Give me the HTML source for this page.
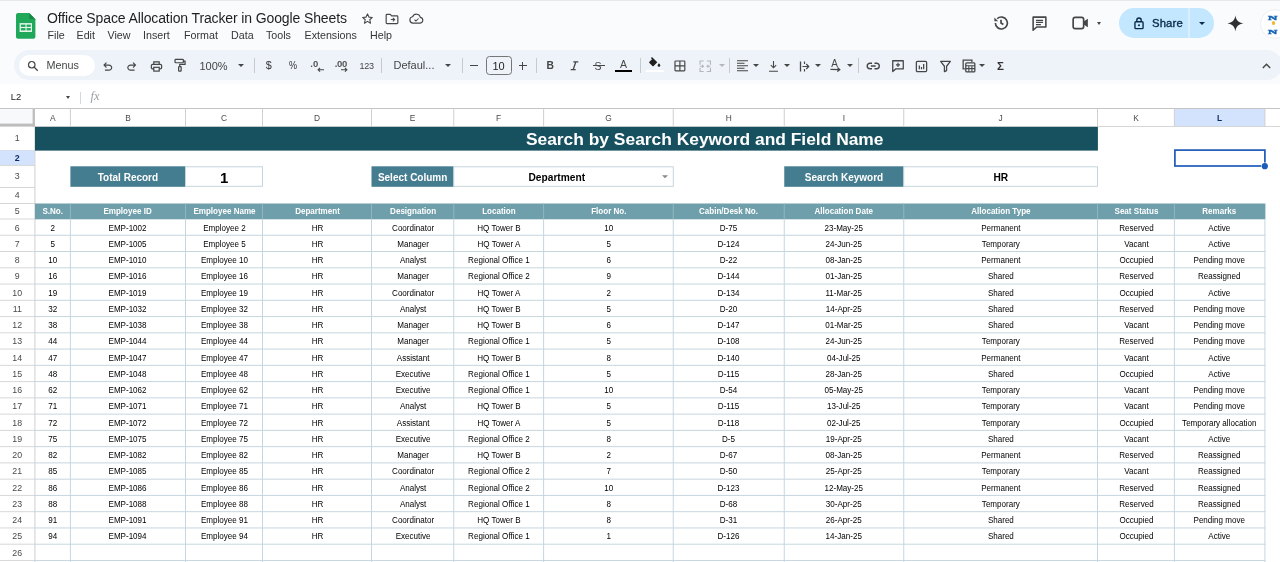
<!DOCTYPE html>
<html lang="en"><head><meta charset="utf-8">
<title>Office Space Allocation Tracker in Google Sheets</title>
<style>
*{box-sizing:border-box;margin:0;padding:0}
html,body{width:1280px;height:562px;overflow:hidden;background:#f9fbfd;font-family:"Liberation Sans",sans-serif;color:#1f1f1f}
#top{position:absolute;left:0;top:0;width:1280px;height:84px;background:#f9fbfd}
#topline{position:absolute;left:0;top:0;width:1280px;height:1px;background:#e6e8eb}
.abs{position:absolute}
#doctitle{position:absolute;left:47px;top:9px;font-size:14px;line-height:19px;letter-spacing:-0.12px;color:#1f1f1f;white-space:nowrap}
.menu{position:absolute;top:28px;font-size:10.7px;line-height:14px;color:#333638;white-space:nowrap}
#tb{position:absolute;left:14px;top:50px;width:1268px;height:30px;border-radius:15px;background:#eef2f9}
#menus{position:absolute;left:19px;top:54.5px;width:76px;height:21px;border-radius:11px;background:#fff}
.tt{position:absolute;font-size:10.5px;line-height:14px;color:#444746;white-space:nowrap}
.sep{position:absolute;top:58px;width:1px;height:15px;background:#c7c9cc}
.ic{position:absolute;overflow:visible}
.caret{position:absolute;width:0;height:0;border-left:3px solid transparent;border-right:3px solid transparent;border-top:3.2px solid #444746}
#fbar{position:absolute;left:0;top:84px;width:1280px;height:24.5px;background:#fff}
#grid{position:absolute;left:0;top:0;width:1280px;height:562px}
#gridbg{position:absolute;left:0;top:108.5px;width:1280px;height:454px;background:#fff}
.cl{position:absolute;text-align:center;font-size:8.4px;line-height:18.5px;color:#4a4a4a}
.cl.sel{color:#0b2a5c;font-weight:bold}
.rl{position:absolute;left:0;width:34.5px;text-align:center;font-size:8.8px;color:#4a4a4a}
.rl.sel{color:#0b2a5c;font-weight:bold}
.title{position:absolute;color:#fff;font-weight:bold;font-size:17.4px;text-align:center;white-space:nowrap;padding-left:276.4px}
.lbl{position:absolute;color:#fff;font-weight:bold;font-size:10px;text-align:center;white-space:nowrap}
.val{position:absolute;color:#000;font-weight:bold;font-size:10.2px;text-align:center;white-space:nowrap}
.val.big{font-size:15px}
.h5c{position:absolute;color:#fff;font-weight:bold;font-size:8.5px;transform:scaleX(.947);text-align:center;white-space:nowrap}
.c{position:absolute;color:#000;font-size:8.5px;transform:scaleX(.947);text-align:center;white-space:nowrap}
</style></head><body>
<div id="all" style="position:absolute;left:0;top:0;width:1280px;height:562px;will-change:transform">
<div id="top"></div>
<div id="topline"></div>
<!-- sheets logo -->
<svg class="ic" style="left:16.2px;top:12.9px" width="19.4" height="25.8" viewBox="0 0 19.4 25.8">
  <path d="M2 0H13.2L19.4 6.2V23.8a2 2 0 0 1-2 2H2a2 2 0 0 1-2-2V2a2 2 0 0 1 2-2z" fill="#1fa85a"/>
  <path d="M13.2 0L19.4 6.2H15a1.8 1.8 0 0 1-1.8-1.8z" fill="#168a43"/>
  <rect x="3.6" y="10.1" width="12.4" height="8.9" fill="#e4f5ea"/>
  <rect x="4.9" y="11.6" width="4.6" height="2.3" fill="#1fa85a"/><rect x="10.6" y="11.6" width="4.2" height="2.3" fill="#1fa85a"/>
  <rect x="4.9" y="15.1" width="4.6" height="2.3" fill="#1fa85a"/><rect x="10.6" y="15.1" width="4.2" height="2.3" fill="#1fa85a"/>
</svg>
<div id="doctitle">Office Space Allocation Tracker in Google Sheets</div>
<!-- star, move, cloud -->
<svg class="ic" style="left:361px;top:12px" width="13" height="13" viewBox="0 0 24 24"><path d="M12 3.5l2.6 5.9 6.4.6-4.8 4.3 1.4 6.3L12 17.3l-5.6 3.3 1.4-6.3L3 10l6.4-.6z" fill="none" stroke="#444746" stroke-width="2" stroke-linejoin="round"/></svg>
<svg class="ic" style="left:385px;top:12.5px" width="14" height="12" viewBox="0 0 24 20"><path d="M2 3.5a1.5 1.5 0 0 1 1.5-1.5H9l2.5 2.5h9A1.5 1.5 0 0 1 22 6v10.5a1.5 1.5 0 0 1-1.5 1.5h-17A1.5 1.5 0 0 1 2 16.500z" fill="none" stroke="#444746" stroke-width="2"/><path d="M10 11h6M13.500 8l3 3-3 3" fill="none" stroke="#444746" stroke-width="1.800"/></svg>
<svg class="ic" style="left:409px;top:13px" width="15" height="11" viewBox="0 0 26 19"><path d="M7 17.500a5.500 5.500 0 0 1-.7-10.950A7 7 0 0 1 19.700 7.600 5 5 0 0 1 19.500 17.500z" fill="none" stroke="#444746" stroke-width="2"/><path d="M9.500 11.500l2.500 2.500 4.500-4.500" fill="none" stroke="#444746" stroke-width="1.800"/></svg>
<!-- menus -->
<div class="menu" style="left:47.5px">File</div>
<div class="menu" style="left:76.5px">Edit</div>
<div class="menu" style="left:107.5px">View</div>
<div class="menu" style="left:143px">Insert</div>
<div class="menu" style="left:184px">Format</div>
<div class="menu" style="left:231px">Data</div>
<div class="menu" style="left:266px">Tools</div>
<div class="menu" style="left:304.500px">Extensions</div>
<div class="menu" style="left:370px">Help</div>
<!-- right top -->
<svg class="ic" style="left:992px;top:14px" width="18" height="18" viewBox="0 0 24 24"><path d="M4.500 12a8 8 0 1 0 2.400-5.700" fill="none" stroke="#444746" stroke-width="2.200"/><path d="M3.200 4.500v5h5z" fill="#444746"/><path d="M12 7.500V12l3.200 2" fill="none" stroke="#444746" stroke-width="2.200"/></svg>
<svg class="ic" style="left:1031px;top:15px" width="17" height="17" viewBox="0 0 24 24"><path d="M3 3h18v14H8l-5 4.500z" fill="none" stroke="#444746" stroke-width="2.200" stroke-linejoin="round"/><path d="M7 7.500h10M7 10.500h10M7 13.500h7" stroke="#444746" stroke-width="1.600"/></svg>
<svg class="ic" style="left:1072px;top:16px" width="17" height="14" viewBox="0 0 24 20"><rect x="1.500" y="2" width="15" height="16" rx="3" fill="none" stroke="#444746" stroke-width="2.400"/><path d="M16.500 8l6-4v12l-6-4z" fill="#444746"/></svg>
<div class="caret" style="left:1096.500px;top:21.500px;border-left-width:2.800px;border-right-width:2.800px;border-top-width:3px"></div>
<div class="abs" style="left:1119px;top:8px;width:95px;height:30px;border-radius:15px;background:#c2e7ff"></div>
<div class="abs" style="left:1188.200px;top:8px;width:1.800px;height:30px;background:#d9eeff"></div>
<svg class="ic" style="left:1134px;top:16.500px" width="10" height="12.500" viewBox="0 0 16 20"><rect x="1.500" y="7.500" width="13" height="11" rx="1.500" fill="none" stroke="#0b2a4a" stroke-width="2.200"/><path d="M4.500 7.500V5a3.500 3.500 0 0 1 7 0v2.500" fill="none" stroke="#0b2a4a" stroke-width="2.200"/><circle cx="8" cy="13" r="1.600" fill="#0b2a4a"/></svg>
<div class="abs" style="left:1152px;top:16px;font-size:11.300px;line-height:14px;color:#0b2a4a;-webkit-text-stroke:0.350px #0b2a4a;letter-spacing:0.150px;transform-origin:0 0">Share</div>
<div class="caret" style="left:1199px;top:22px;border-top-color:#0b2a4a"></div>
<svg class="ic" style="left:1227.200px;top:15px" width="16.800" height="16.800" viewBox="0 0 24 24"><path d="M12 0.500C12.700 7.500 16.500 11.300 23.500 12 16.500 12.700 12.700 16.500 12 23.500 11.300 16.500 7.500 12.700 0.500 12 7.500 11.300 11.300 7.500 12 0.500z" fill="#303030"/></svg>
<div class="abs" style="left:1260px;top:8.500px;width:30px;height:30px;border-radius:50%;background:#fff;border:1px solid #eeeef1;overflow:hidden">
  <div class="abs" style="left:6.800px;top:4.300px;font-family:'Liberation Serif',serif;font-weight:bold;font-size:7px;line-height:8px;color:#1666b8;-webkit-text-stroke:0.500px #1666b8;transform:scaleX(1.850);transform-origin:0 0">N</div>
  <div class="abs" style="left:10.800px;top:11.500px;width:3.400px;height:4.200px;border-radius:1.500px;background:#f2b632"></div>
  <div class="abs" style="left:6.800px;top:18.500px;font-family:'Liberation Serif',serif;font-weight:bold;font-size:7px;line-height:8px;color:#1666b8;-webkit-text-stroke:0.500px #1666b8;transform:scaleX(1.850);transform-origin:0 0">N</div>
</div>
<!-- toolbar -->
<div id="tb"></div>
<div id="menus"></div>
<svg class="ic" style="left:26.500px;top:59.700px" width="12" height="12" viewBox="0 0 24 24"><circle cx="9.500" cy="9.500" r="6.500" fill="none" stroke="#444746" stroke-width="2.400"/><path d="M14.500 14.500l7 7" stroke="#444746" stroke-width="2.600"/></svg>
<div class="tt" style="left:46.500px;top:57.800px;font-size:10.800px">Menus</div>
<!-- undo/redo -->
<svg class="ic" style="left:101px;top:59.500px" width="13.500" height="13.500" viewBox="0 0 24 24"><path d="M7 19v-2h7.100q1.575 0 2.738-1T18 13.500 16.838 11 14.100 10H7.800l2.600 2.600L9 14 4 9l5-5 1.400 1.400L7.800 8h6.300q2.425 0 4.163 1.575T20 13.500t-1.737 3.925T14.100 19z" fill="#444746"/></svg>
<svg class="ic" style="left:125px;top:59.500px" width="13.500" height="13.500" viewBox="0 0 24 24"><g transform="translate(24,0) scale(-1,1)"><path d="M7 19v-2h7.100q1.575 0 2.738-1T18 13.500 16.838 11 14.100 10H7.800l2.600 2.600L9 14 4 9l5-5 1.400 1.400L7.800 8h6.300q2.425 0 4.163 1.575T20 13.500t-1.737 3.925T14.100 19z" fill="#444746"/></g></svg>
<!-- print -->
<svg class="ic" style="left:150px;top:59.700px" width="13" height="13" viewBox="0 0 24 24"><path d="M7 8V3.500h10V8" fill="none" stroke="#444746" stroke-width="2.200"/><rect x="2.500" y="8" width="19" height="8.500" rx="2.500" fill="none" stroke="#444746" stroke-width="2.200"/><rect x="7" y="13.500" width="10" height="7" fill="#eef2f9" stroke="#444746" stroke-width="2.200"/></svg>
<!-- paint format -->
<svg class="ic" style="left:173px;top:58.300px" width="13.500" height="14.500" viewBox="0 0 24 26"><rect x="3.500" y="2.500" width="15" height="6" rx="1.500" fill="none" stroke="#444746" stroke-width="2.200"/><path d="M18.500 5.500h3v6H12v4" fill="none" stroke="#444746" stroke-width="2.200"/><rect x="10" y="15.500" width="4.500" height="8" rx="1" fill="none" stroke="#444746" stroke-width="2.200"/></svg>
<div class="tt" style="left:199.500px;top:58.500px;font-size:11px">100%</div>
<div class="caret" style="left:238px;top:64px"></div>
<div class="sep" style="left:253.500px"></div>
<div class="tt" style="left:265.700px;top:58px;font-size:10.800px;color:#333">$</div>
<div class="tt" style="left:288.500px;top:59px;font-size:10.300px;color:#333;transform:scaleX(.88);transform-origin:0 0">%</div>
<div class="tt" style="left:310.300px;top:56.500px;font-size:9.500px;font-weight:bold;color:#555">.0</div>
<svg class="ic" style="left:316.700px;top:67px" width="7" height="5.500" viewBox="0 0 8 6"><path d="M8 3H1.500M3.500 0.800L1.200 3l2.300 2.200" fill="none" stroke="#444746" stroke-width="1.200"/></svg>
<div class="tt" style="left:334.700px;top:56.500px;font-size:9.500px;font-weight:bold;letter-spacing:-0.300px;color:#555">.00</div>
<svg class="ic" style="left:341px;top:67px" width="7" height="5.500" viewBox="0 0 8 6"><path d="M0 3h6.500M4.500 0.800L6.800 3 4.500 5.200" fill="none" stroke="#444746" stroke-width="1.200"/></svg>
<div class="tt" style="left:359.500px;top:58.500px;font-size:9px;letter-spacing:-0.200px">123</div>
<div class="sep" style="left:381px"></div>
<div class="tt" style="left:393.500px;top:58px;font-size:11px">Defaul...</div>
<div class="caret" style="left:444.500px;top:64px"></div>
<div class="sep" style="left:462px"></div>
<div class="abs" style="left:470px;top:64.800px;width:8.300px;height:1.300px;background:#444746"></div>
<div class="abs" style="left:486px;top:56px;width:26px;height:18.500px;border:1px solid #747775;border-radius:3.500px"></div>
<div class="tt" style="left:492.500px;top:58.500px;font-size:11px;color:#1f1f1f">10</div>
<div class="abs" style="left:518.500px;top:64.800px;width:8px;height:1.300px;background:#444746"></div>
<div class="abs" style="left:521.850px;top:61.500px;width:1.300px;height:8px;background:#444746"></div>
<div class="sep" style="left:535.500px"></div>
<div class="tt" style="left:546.500px;top:58.500px;font-size:10.300px;font-weight:bold;color:#444746">B</div>
<svg class="ic" style="left:570px;top:61px" width="9" height="9.500" viewBox="0 0 9 9.500"><path d="M3.300 0.900h5M0.700 8.600h5M5.800 0.900L3.200 8.600" fill="none" stroke="#444746" stroke-width="1.350"/></svg>
<div class="tt" style="left:594.500px;top:58.500px;font-size:10.500px;color:#444746">S</div>
<div class="abs" style="left:592.500px;top:65px;width:12px;height:1.300px;background:#444746"></div>
<div class="tt" style="left:620px;top:57px;font-size:10.500px;color:#444746">A</div>
<div class="abs" style="left:615px;top:69.800px;width:17px;height:2.400px;background:#000"></div>
<div class="sep" style="left:639.500px"></div>
<!-- fill color -->
<svg class="ic" style="left:648px;top:57px" width="13.500" height="10.700" viewBox="0 0 24 19"><path d="M5 2l2-2 9.500 9.500-6.500 6.500a1.500 1.500 0 0 1-2.100 0L2.500 10.500a1.500 1.500 0 0 1 0-2.100L7.500 3.500z" fill="#1f1f1f"/><path d="M19.500 11s-2.300 2.600-2.300 4.200a2.300 2.300 0 0 0 4.600 0c0-1.600-2.300-4.200-2.300-4.200z" fill="#1f1f1f"/></svg>
<div class="abs" style="left:646px;top:69.500px;width:17.500px;height:2.800px;background:#fff"></div>
<!-- borders -->
<svg class="ic" style="left:674px;top:60px" width="11.800" height="11.800" viewBox="0 0 24 24"><rect x="2" y="2" width="20" height="20" rx="1.500" fill="none" stroke="#444746" stroke-width="2.400"/><path d="M12 2v20M2 12h20" stroke="#444746" stroke-width="2.400"/></svg>
<!-- merge (disabled) -->
<svg class="ic" style="left:699px;top:59.500px" width="12.500" height="12.500" viewBox="0 0 24 24"><path d="M9 2H2v7M15 2h7v7M9 22H2v-7M15 22h7v-7M2 12h6M16 12h6M6 9.500L8.500 12 6 14.500M18 9.500L15.500 12 18 14.500" fill="none" stroke="#b4b7ba" stroke-width="2.200"/></svg>
<div class="caret" style="left:718.500px;top:64px;border-top-color:#b4b7ba"></div>
<div class="sep" style="left:728.500px"></div>
<!-- halign -->
<svg class="ic" style="left:736.500px;top:60px" width="11" height="11.500" viewBox="0 0 22 23"><path d="M0 1.500h22M0 6.500h15M0 11.500h22M0 16.500h15M0 21.500h22" stroke="#444746" stroke-width="2.300"/></svg>
<div class="caret" style="left:753px;top:64px"></div>
<!-- valign -->
<svg class="ic" style="left:768px;top:59.500px" width="11" height="12.500" viewBox="0 0 24 28"><path d="M12 2v15M6 11.500l6 6 6-6M2 25h20" fill="none" stroke="#444746" stroke-width="2.400"/></svg>
<div class="caret" style="left:784px;top:64px"></div>
<!-- wrap -->
<svg class="ic" style="left:799px;top:60.500px" width="11" height="11" viewBox="0 0 22 22"><path d="M3 1v20" fill="none" stroke="#444746" stroke-width="2.600"/><path d="M11 1v5M11 16v5" fill="none" stroke="#444746" stroke-width="2.300"/><path d="M7 11h12M14.500 6l5 5-5 5" fill="none" stroke="#444746" stroke-width="2.300"/></svg>
<div class="caret" style="left:815px;top:64px"></div>
<!-- rotate -->
<div class="tt" style="left:831.300px;top:57.300px;font-size:10px;color:#444746">A</div>
<svg class="ic" style="left:830px;top:67.300px" width="11" height="5" viewBox="0 0 11 5"><path d="M0.500 2.300l9 0.400M7.500 0.500l2.300 2.200L7.300 4.600" fill="none" stroke="#444746" stroke-width="1.200"/></svg>
<div class="caret" style="left:846.500px;top:64px"></div>
<div class="sep" style="left:858px"></div>
<!-- link -->
<svg class="ic" style="left:866px;top:61.500px" width="14.500" height="8" viewBox="0 0 24 13"><path d="M10 2H6.500a4.500 4.500 0 0 0 0 9H10M14 2h3.500a4.500 4.500 0 0 1 0 9H14M8 6.500h8" fill="none" stroke="#444746" stroke-width="2.300"/></svg>
<!-- comment add -->
<svg class="ic" style="left:890.500px;top:59px" width="14" height="14" viewBox="0 0 24 24"><path d="M3 3h18v14H8l-5 4.500z" fill="none" stroke="#444746" stroke-width="2.200" stroke-linejoin="round"/><path d="M12 6.500v7M8.500 10h7" stroke="#444746" stroke-width="2"/></svg>
<!-- chart -->
<svg class="ic" style="left:915px;top:59.500px" width="13" height="13" viewBox="0 0 24 24"><rect x="2.500" y="2.500" width="19" height="19" rx="2" fill="none" stroke="#444746" stroke-width="2.300"/><path d="M8 17v-7M12 17v-4M16 17V7.500" stroke="#444746" stroke-width="2.300"/></svg>
<!-- filter -->
<svg class="ic" style="left:939px;top:60px" width="13" height="12.500" viewBox="0 0 24 23"><path d="M3 2.500h18l-7 9v8l-4 2v-10z" fill="none" stroke="#444746" stroke-width="2.300" stroke-linejoin="round"/></svg>
<!-- table views -->
<svg class="ic" style="left:961.500px;top:59px" width="14" height="14" viewBox="0 0 24 24"><path d="M5 17H2V2h15v3" fill="none" stroke="#444746" stroke-width="2.200"/><rect x="6.500" y="6.500" width="15.500" height="15.500" rx="1.500" fill="none" stroke="#444746" stroke-width="2.200"/><path d="M6.500 11.500h15.500M6.500 16.500h15.500M11.700 11.500v10.500M17 11.500v10.500" stroke="#444746" stroke-width="1.800"/></svg>
<div class="caret" style="left:979px;top:64px"></div>
<div class="tt" style="left:997px;top:58.500px;font-size:11.500px;font-weight:bold;color:#333">Σ</div>
<svg class="ic" style="left:1262.200px;top:63px" width="9" height="6" viewBox="0 0 9 6"><path d="M0.800 5l3.700-3.700L8.200 5" fill="none" stroke="#444746" stroke-width="1.400"/></svg>

<div id="fbar">
  <div class="abs" style="left:10.8px;top:5.7px;font-size:9.4px;line-height:14px;color:#202124">L2</div>
  <div class="caret" style="left:65.5px;top:11.6px;border-left-width:2.9px;border-right-width:2.9px;border-top-width:3.2px"></div>
  <div class="abs" style="left:80.3px;top:7.5px;width:1px;height:12px;background:#d5d8dc"></div>
  <div class="abs" style="left:90.5px;top:4.5px;font-size:12.5px;line-height:14px;color:#9aa0a6;font-style:italic;font-family:'Liberation Serif',serif">fx</div>
</div>
<div id="gridbg"></div>
<div id="grid">
<svg class="abs" style="left:0;top:0" width="1280" height="562" viewBox="0 0 1280 562"><rect x="0" y="108.5" width="1280" height="18.3" fill="#fff"/>
<rect x="1174.4" y="108.5" width="90.5" height="18.3" fill="#d3e3fd"/>
<rect x="0" y="108" width="1280" height="1" fill="#c4c4c4"/>
<rect x="35" y="126" width="1245" height="1" fill="#d6d6d6"/>
<rect x="69.9" y="108.5" width="1" height="18.3" fill="#d0d0d0"/>
<rect x="185" y="108.5" width="1" height="18.3" fill="#d0d0d0"/>
<rect x="262" y="108.5" width="1" height="18.3" fill="#d0d0d0"/>
<rect x="371" y="108.5" width="1" height="18.3" fill="#d0d0d0"/>
<rect x="453.25" y="108.5" width="1" height="18.3" fill="#d0d0d0"/>
<rect x="543.1" y="108.5" width="1" height="18.3" fill="#d0d0d0"/>
<rect x="672.75" y="108.5" width="1" height="18.3" fill="#d0d0d0"/>
<rect x="783.75" y="108.5" width="1" height="18.3" fill="#d0d0d0"/>
<rect x="903.25" y="108.5" width="1" height="18.3" fill="#d0d0d0"/>
<rect x="1097" y="108.5" width="1" height="18.3" fill="#d0d0d0"/>
<rect x="1173.9" y="108.5" width="1" height="18.3" fill="#d0d0d0"/>
<rect x="1264.4" y="108.5" width="1" height="18.3" fill="#d0d0d0"/>
<rect x="0" y="109" width="33" height="14.8" fill="#f8f9fa"/>
<rect x="32.6" y="109" width="2.3" height="17.8" fill="#bdbdbd"/>
<rect x="0" y="123.6" width="34.9" height="3" fill="#bdbdbd"/>
<rect x="0" y="150" width="35" height="1" fill="#d8d8d8"/>
<rect x="0" y="150.5" width="34.5" height="15" fill="#d3e3fd"/>
<rect x="0" y="165" width="35" height="1" fill="#d8d8d8"/>
<rect x="0" y="187" width="35" height="1" fill="#d8d8d8"/>
<rect x="0" y="203" width="35" height="1" fill="#d8d8d8"/>
<rect x="0" y="218.5" width="35" height="1" fill="#d8d8d8"/>
<rect x="0" y="234.76" width="35" height="1" fill="#d8d8d8"/>
<rect x="0" y="251.02" width="35" height="1" fill="#d8d8d8"/>
<rect x="0" y="267.28" width="35" height="1" fill="#d8d8d8"/>
<rect x="0" y="283.54" width="35" height="1" fill="#d8d8d8"/>
<rect x="0" y="299.8" width="35" height="1" fill="#d8d8d8"/>
<rect x="0" y="316.06" width="35" height="1" fill="#d8d8d8"/>
<rect x="0" y="332.32" width="35" height="1" fill="#d8d8d8"/>
<rect x="0" y="348.58" width="35" height="1" fill="#d8d8d8"/>
<rect x="0" y="364.84" width="35" height="1" fill="#d8d8d8"/>
<rect x="0" y="381.1" width="35" height="1" fill="#d8d8d8"/>
<rect x="0" y="397.36" width="35" height="1" fill="#d8d8d8"/>
<rect x="0" y="413.62" width="35" height="1" fill="#d8d8d8"/>
<rect x="0" y="429.88" width="35" height="1" fill="#d8d8d8"/>
<rect x="0" y="446.14" width="35" height="1" fill="#d8d8d8"/>
<rect x="0" y="462.4" width="35" height="1" fill="#d8d8d8"/>
<rect x="0" y="478.66" width="35" height="1" fill="#d8d8d8"/>
<rect x="0" y="494.92" width="35" height="1" fill="#d8d8d8"/>
<rect x="0" y="511.18" width="35" height="1" fill="#d8d8d8"/>
<rect x="0" y="527.44" width="35" height="1" fill="#d8d8d8"/>
<rect x="0" y="543.7" width="35" height="1" fill="#d8d8d8"/>
<rect x="0" y="559.96" width="35" height="1" fill="#d8d8d8"/>
<rect x="0" y="576.22" width="35" height="1" fill="#d8d8d8"/>
<rect x="34.4" y="126.8" width="1" height="435.2" fill="#d0d0d0"/>
<rect x="35" y="126.9" width="1062.9" height="23.7" fill="#17505f"/>
<rect x="70.4" y="166.3" width="115.1" height="20.5" fill="#457d90"/>
<rect x="185.5" y="166.8" width="77" height="19.5" fill="#fff" stroke="#c6d5dc" stroke-width="1"/>
<rect x="371.5" y="166.3" width="82.25" height="20.5" fill="#457d90"/>
<rect x="453.75" y="166.8" width="219.55" height="19.5" fill="#fff" stroke="#c6d5dc" stroke-width="1"/>
<rect x="784.25" y="166.3" width="119.5" height="20.5" fill="#457d90"/>
<rect x="903.75" y="166.8" width="193.75" height="19.5" fill="#fff" stroke="#c6d5dc" stroke-width="1"/>
<path d="M662 175.15h6l-3 3.2z" fill="#8a8a8a"/>
<rect x="35" y="203.5" width="1230.4" height="15.8" fill="#6f9fab"/>
<rect x="69.9" y="203.5" width="1" height="15.5" fill="#8fb6c0"/>
<rect x="185" y="203.5" width="1" height="15.5" fill="#8fb6c0"/>
<rect x="262" y="203.5" width="1" height="15.5" fill="#8fb6c0"/>
<rect x="371" y="203.5" width="1" height="15.5" fill="#8fb6c0"/>
<rect x="453.25" y="203.5" width="1" height="15.5" fill="#8fb6c0"/>
<rect x="543.1" y="203.5" width="1" height="15.5" fill="#8fb6c0"/>
<rect x="672.75" y="203.5" width="1" height="15.5" fill="#8fb6c0"/>
<rect x="783.75" y="203.5" width="1" height="15.5" fill="#8fb6c0"/>
<rect x="903.25" y="203.5" width="1" height="15.5" fill="#8fb6c0"/>
<rect x="1097" y="203.5" width="1" height="15.5" fill="#8fb6c0"/>
<rect x="1173.9" y="203.5" width="1" height="15.5" fill="#8fb6c0"/>
<rect x="35" y="234.76" width="1230.5" height="1" fill="#c6d6df"/>
<rect x="35" y="251.02" width="1230.5" height="1" fill="#c6d6df"/>
<rect x="35" y="267.28" width="1230.5" height="1" fill="#c6d6df"/>
<rect x="35" y="283.54" width="1230.5" height="1" fill="#c6d6df"/>
<rect x="35" y="299.8" width="1230.5" height="1" fill="#c6d6df"/>
<rect x="35" y="316.06" width="1230.5" height="1" fill="#c6d6df"/>
<rect x="35" y="332.32" width="1230.5" height="1" fill="#c6d6df"/>
<rect x="35" y="348.58" width="1230.5" height="1" fill="#c6d6df"/>
<rect x="35" y="364.84" width="1230.5" height="1" fill="#c6d6df"/>
<rect x="35" y="381.1" width="1230.5" height="1" fill="#c6d6df"/>
<rect x="35" y="397.36" width="1230.5" height="1" fill="#c6d6df"/>
<rect x="35" y="413.62" width="1230.5" height="1" fill="#c6d6df"/>
<rect x="35" y="429.88" width="1230.5" height="1" fill="#c6d6df"/>
<rect x="35" y="446.14" width="1230.5" height="1" fill="#c6d6df"/>
<rect x="35" y="462.4" width="1230.5" height="1" fill="#c6d6df"/>
<rect x="35" y="478.66" width="1230.5" height="1" fill="#c6d6df"/>
<rect x="35" y="494.92" width="1230.5" height="1" fill="#c6d6df"/>
<rect x="35" y="511.18" width="1230.5" height="1" fill="#c6d6df"/>
<rect x="35" y="527.44" width="1230.5" height="1" fill="#c6d6df"/>
<rect x="35" y="543.7" width="1230.5" height="1" fill="#c6d6df"/>
<rect x="35" y="559.96" width="1230.5" height="1" fill="#c6d6df"/>
<rect x="69.9" y="219" width="1" height="343" fill="#c6d6df"/>
<rect x="185" y="219" width="1" height="343" fill="#c6d6df"/>
<rect x="262" y="219" width="1" height="343" fill="#c6d6df"/>
<rect x="371" y="219" width="1" height="343" fill="#c6d6df"/>
<rect x="453.25" y="219" width="1" height="343" fill="#c6d6df"/>
<rect x="543.1" y="219" width="1" height="343" fill="#c6d6df"/>
<rect x="672.75" y="219" width="1" height="343" fill="#c6d6df"/>
<rect x="783.75" y="219" width="1" height="343" fill="#c6d6df"/>
<rect x="903.25" y="219" width="1" height="343" fill="#c6d6df"/>
<rect x="1097" y="219" width="1" height="343" fill="#c6d6df"/>
<rect x="1173.9" y="219" width="1" height="343" fill="#c6d6df"/>
<rect x="1264.4" y="219" width="1" height="343" fill="#c6d6df"/>
<rect x="1174.9" y="150.1" width="90" height="15.9" fill="none" stroke="#1c5bb8" stroke-width="1.7"/>
<circle cx="1264.8" cy="166.2" r="3.6" fill="#fff"/><circle cx="1264.8" cy="166.2" r="3.1" fill="#1c5bb8"/></svg>
<div class="cl" style="left:35px;width:35.4px;top:108.5px;height:18.3px">A</div>
<div class="cl" style="left:70.4px;width:115.1px;top:108.5px;height:18.3px">B</div>
<div class="cl" style="left:185.5px;width:77px;top:108.5px;height:18.3px">C</div>
<div class="cl" style="left:262.5px;width:109px;top:108.5px;height:18.3px">D</div>
<div class="cl" style="left:371.5px;width:82.25px;top:108.5px;height:18.3px">E</div>
<div class="cl" style="left:453.75px;width:89.85px;top:108.5px;height:18.3px">F</div>
<div class="cl" style="left:543.6px;width:129.65px;top:108.5px;height:18.3px">G</div>
<div class="cl" style="left:673.25px;width:111px;top:108.5px;height:18.3px">H</div>
<div class="cl" style="left:784.25px;width:119.5px;top:108.5px;height:18.3px">I</div>
<div class="cl" style="left:903.75px;width:193.75px;top:108.5px;height:18.3px">J</div>
<div class="cl" style="left:1097.5px;width:76.9px;top:108.5px;height:18.3px">K</div>
<div class="cl sel" style="left:1174.4px;width:90.5px;top:108.5px;height:18.3px">L</div>
<div class="rl" style="top:126.3px;height:23.7px;line-height:24.7px">1</div>
<div class="rl sel" style="top:150px;height:15px;line-height:16px">2</div>
<div class="rl" style="top:165px;height:22px;line-height:23px">3</div>
<div class="rl" style="top:186.5px;height:16px;line-height:17px">4</div>
<div class="rl" style="top:203px;height:15.5px;line-height:16.5px">5</div>
<div class="rl" style="top:219.5px;height:16.26px;line-height:17.26px">6</div>
<div class="rl" style="top:235.76px;height:16.26px;line-height:17.26px">7</div>
<div class="rl" style="top:252.02px;height:16.26px;line-height:17.26px">8</div>
<div class="rl" style="top:268.28px;height:16.26px;line-height:17.26px">9</div>
<div class="rl" style="top:284.54px;height:16.26px;line-height:17.26px">10</div>
<div class="rl" style="top:300.8px;height:16.26px;line-height:17.26px">11</div>
<div class="rl" style="top:317.06px;height:16.26px;line-height:17.26px">12</div>
<div class="rl" style="top:333.32px;height:16.26px;line-height:17.26px">13</div>
<div class="rl" style="top:349.58px;height:16.26px;line-height:17.26px">14</div>
<div class="rl" style="top:365.84px;height:16.26px;line-height:17.26px">15</div>
<div class="rl" style="top:382.1px;height:16.26px;line-height:17.26px">16</div>
<div class="rl" style="top:398.36px;height:16.26px;line-height:17.26px">17</div>
<div class="rl" style="top:414.62px;height:16.26px;line-height:17.26px">18</div>
<div class="rl" style="top:430.88px;height:16.26px;line-height:17.26px">19</div>
<div class="rl" style="top:447.14px;height:16.26px;line-height:17.26px">20</div>
<div class="rl" style="top:463.4px;height:16.26px;line-height:17.26px">21</div>
<div class="rl" style="top:479.66px;height:16.26px;line-height:17.26px">22</div>
<div class="rl" style="top:495.92px;height:16.26px;line-height:17.26px">23</div>
<div class="rl" style="top:512.18px;height:16.26px;line-height:17.26px">24</div>
<div class="rl" style="top:528.44px;height:16.26px;line-height:17.26px">25</div>
<div class="rl" style="top:544.7px;height:16.26px;line-height:17.26px">26</div>
<div class="rl" style="top:560.96px;height:16.26px;line-height:17.26px">27</div>
<div class="title" style="left:35px;width:1063px;top:126.8px;height:23.7px;line-height:25.7px">Search by Search Keyword and Field Name</div>
<div class="lbl" style="left:70.4px;width:115.1px;top:166.3px;height:20.5px;line-height:24.1px">Total Record</div>
<div class="val big" style="left:185.5px;width:77.5px;top:166.3px;height:20.5px;line-height:24.1px">1</div>
<div class="lbl" style="left:371.5px;width:82.25px;top:166.3px;height:20.5px;line-height:24.1px">Select Column</div>
<div class="val" style="left:453.75px;width:220.05px;top:166.3px;height:20.5px;line-height:24.1px"><span style="position:relative;left:-7px">Department</span></div>
<div class="lbl" style="left:784.25px;width:119.5px;top:166.3px;height:20.5px;line-height:24.1px">Search Keyword</div>
<div class="val" style="left:903.75px;width:194.25px;top:166.3px;height:20.5px;line-height:24.1px">HR</div>
<div class="h5c" style="left:35px;width:35.4px;top:202.7px;height:15.5px;line-height:16px">S.No.</div>
<div class="h5c" style="left:70.4px;width:115.1px;top:202.7px;height:15.5px;line-height:16px">Employee ID</div>
<div class="h5c" style="left:185.5px;width:77px;top:202.7px;height:15.5px;line-height:16px">Employee Name</div>
<div class="h5c" style="left:262.5px;width:109px;top:202.7px;height:15.5px;line-height:16px">Department</div>
<div class="h5c" style="left:371.5px;width:82.25px;top:202.7px;height:15.5px;line-height:16px">Designation</div>
<div class="h5c" style="left:453.75px;width:89.85px;top:202.7px;height:15.5px;line-height:16px">Location</div>
<div class="h5c" style="left:543.6px;width:129.65px;top:202.7px;height:15.5px;line-height:16px">Floor No.</div>
<div class="h5c" style="left:673.25px;width:111px;top:202.7px;height:15.5px;line-height:16px">Cabin/Desk No.</div>
<div class="h5c" style="left:784.25px;width:119.5px;top:202.7px;height:15.5px;line-height:16px">Allocation Date</div>
<div class="h5c" style="left:903.75px;width:193.75px;top:202.7px;height:15.5px;line-height:16px">Allocation Type</div>
<div class="h5c" style="left:1097.5px;width:76.9px;top:202.7px;height:15.5px;line-height:16px">Seat Status</div>
<div class="h5c" style="left:1174.4px;width:90.5px;top:202.7px;height:15.5px;line-height:16px">Remarks</div>
<div class="c" style="left:35px;width:35.4px;top:219.5px;height:16.26px;line-height:17.26px">2</div>
<div class="c" style="left:70.4px;width:115.1px;top:219.5px;height:16.26px;line-height:17.26px">EMP-1002</div>
<div class="c" style="left:185.5px;width:77px;top:219.5px;height:16.26px;line-height:17.26px">Employee 2</div>
<div class="c" style="left:262.5px;width:109px;top:219.5px;height:16.26px;line-height:17.26px">HR</div>
<div class="c" style="left:371.5px;width:82.25px;top:219.5px;height:16.26px;line-height:17.26px">Coordinator</div>
<div class="c" style="left:453.75px;width:89.85px;top:219.5px;height:16.26px;line-height:17.26px">HQ Tower B</div>
<div class="c" style="left:543.6px;width:129.65px;top:219.5px;height:16.26px;line-height:17.26px">10</div>
<div class="c" style="left:673.25px;width:111px;top:219.5px;height:16.26px;line-height:17.26px">D-75</div>
<div class="c" style="left:784.25px;width:119.5px;top:219.5px;height:16.26px;line-height:17.26px">23-May-25</div>
<div class="c" style="left:903.75px;width:193.75px;top:219.5px;height:16.26px;line-height:17.26px">Permanent</div>
<div class="c" style="left:1097.5px;width:76.9px;top:219.5px;height:16.26px;line-height:17.26px">Reserved</div>
<div class="c" style="left:1174.4px;width:90.5px;top:219.5px;height:16.26px;line-height:17.26px">Active</div>
<div class="c" style="left:35px;width:35.4px;top:235.76px;height:16.26px;line-height:17.26px">5</div>
<div class="c" style="left:70.4px;width:115.1px;top:235.76px;height:16.26px;line-height:17.26px">EMP-1005</div>
<div class="c" style="left:185.5px;width:77px;top:235.76px;height:16.26px;line-height:17.26px">Employee 5</div>
<div class="c" style="left:262.5px;width:109px;top:235.76px;height:16.26px;line-height:17.26px">HR</div>
<div class="c" style="left:371.5px;width:82.25px;top:235.76px;height:16.26px;line-height:17.26px">Manager</div>
<div class="c" style="left:453.75px;width:89.85px;top:235.76px;height:16.26px;line-height:17.26px">HQ Tower A</div>
<div class="c" style="left:543.6px;width:129.65px;top:235.76px;height:16.26px;line-height:17.26px">5</div>
<div class="c" style="left:673.25px;width:111px;top:235.76px;height:16.26px;line-height:17.26px">D-124</div>
<div class="c" style="left:784.25px;width:119.5px;top:235.76px;height:16.26px;line-height:17.26px">24-Jun-25</div>
<div class="c" style="left:903.75px;width:193.75px;top:235.76px;height:16.26px;line-height:17.26px">Temporary</div>
<div class="c" style="left:1097.5px;width:76.9px;top:235.76px;height:16.26px;line-height:17.26px">Vacant</div>
<div class="c" style="left:1174.4px;width:90.5px;top:235.76px;height:16.26px;line-height:17.26px">Active</div>
<div class="c" style="left:35px;width:35.4px;top:252.02px;height:16.26px;line-height:17.26px">10</div>
<div class="c" style="left:70.4px;width:115.1px;top:252.02px;height:16.26px;line-height:17.26px">EMP-1010</div>
<div class="c" style="left:185.5px;width:77px;top:252.02px;height:16.26px;line-height:17.26px">Employee 10</div>
<div class="c" style="left:262.5px;width:109px;top:252.02px;height:16.26px;line-height:17.26px">HR</div>
<div class="c" style="left:371.5px;width:82.25px;top:252.02px;height:16.26px;line-height:17.26px">Analyst</div>
<div class="c" style="left:453.75px;width:89.85px;top:252.02px;height:16.26px;line-height:17.26px">Regional Office 1</div>
<div class="c" style="left:543.6px;width:129.65px;top:252.02px;height:16.26px;line-height:17.26px">6</div>
<div class="c" style="left:673.25px;width:111px;top:252.02px;height:16.26px;line-height:17.26px">D-22</div>
<div class="c" style="left:784.25px;width:119.5px;top:252.02px;height:16.26px;line-height:17.26px">08-Jan-25</div>
<div class="c" style="left:903.75px;width:193.75px;top:252.02px;height:16.26px;line-height:17.26px">Permanent</div>
<div class="c" style="left:1097.5px;width:76.9px;top:252.02px;height:16.26px;line-height:17.26px">Occupied</div>
<div class="c" style="left:1174.4px;width:90.5px;top:252.02px;height:16.26px;line-height:17.26px">Pending move</div>
<div class="c" style="left:35px;width:35.4px;top:268.28px;height:16.26px;line-height:17.26px">16</div>
<div class="c" style="left:70.4px;width:115.1px;top:268.28px;height:16.26px;line-height:17.26px">EMP-1016</div>
<div class="c" style="left:185.5px;width:77px;top:268.28px;height:16.26px;line-height:17.26px">Employee 16</div>
<div class="c" style="left:262.5px;width:109px;top:268.28px;height:16.26px;line-height:17.26px">HR</div>
<div class="c" style="left:371.5px;width:82.25px;top:268.28px;height:16.26px;line-height:17.26px">Manager</div>
<div class="c" style="left:453.75px;width:89.85px;top:268.28px;height:16.26px;line-height:17.26px">Regional Office 2</div>
<div class="c" style="left:543.6px;width:129.65px;top:268.28px;height:16.26px;line-height:17.26px">9</div>
<div class="c" style="left:673.25px;width:111px;top:268.28px;height:16.26px;line-height:17.26px">D-144</div>
<div class="c" style="left:784.25px;width:119.5px;top:268.28px;height:16.26px;line-height:17.26px">01-Jan-25</div>
<div class="c" style="left:903.75px;width:193.75px;top:268.28px;height:16.26px;line-height:17.26px">Shared</div>
<div class="c" style="left:1097.5px;width:76.9px;top:268.28px;height:16.26px;line-height:17.26px">Reserved</div>
<div class="c" style="left:1174.4px;width:90.5px;top:268.28px;height:16.26px;line-height:17.26px">Reassigned</div>
<div class="c" style="left:35px;width:35.4px;top:284.54px;height:16.26px;line-height:17.26px">19</div>
<div class="c" style="left:70.4px;width:115.1px;top:284.54px;height:16.26px;line-height:17.26px">EMP-1019</div>
<div class="c" style="left:185.5px;width:77px;top:284.54px;height:16.26px;line-height:17.26px">Employee 19</div>
<div class="c" style="left:262.5px;width:109px;top:284.54px;height:16.26px;line-height:17.26px">HR</div>
<div class="c" style="left:371.5px;width:82.25px;top:284.54px;height:16.26px;line-height:17.26px">Coordinator</div>
<div class="c" style="left:453.75px;width:89.85px;top:284.54px;height:16.26px;line-height:17.26px">HQ Tower A</div>
<div class="c" style="left:543.6px;width:129.65px;top:284.54px;height:16.26px;line-height:17.26px">2</div>
<div class="c" style="left:673.25px;width:111px;top:284.54px;height:16.26px;line-height:17.26px">D-134</div>
<div class="c" style="left:784.25px;width:119.5px;top:284.54px;height:16.26px;line-height:17.26px">11-Mar-25</div>
<div class="c" style="left:903.75px;width:193.75px;top:284.54px;height:16.26px;line-height:17.26px">Shared</div>
<div class="c" style="left:1097.5px;width:76.9px;top:284.54px;height:16.26px;line-height:17.26px">Occupied</div>
<div class="c" style="left:1174.4px;width:90.5px;top:284.54px;height:16.26px;line-height:17.26px">Active</div>
<div class="c" style="left:35px;width:35.4px;top:300.8px;height:16.26px;line-height:17.26px">32</div>
<div class="c" style="left:70.4px;width:115.1px;top:300.8px;height:16.26px;line-height:17.26px">EMP-1032</div>
<div class="c" style="left:185.5px;width:77px;top:300.8px;height:16.26px;line-height:17.26px">Employee 32</div>
<div class="c" style="left:262.5px;width:109px;top:300.8px;height:16.26px;line-height:17.26px">HR</div>
<div class="c" style="left:371.5px;width:82.25px;top:300.8px;height:16.26px;line-height:17.26px">Analyst</div>
<div class="c" style="left:453.75px;width:89.85px;top:300.8px;height:16.26px;line-height:17.26px">HQ Tower B</div>
<div class="c" style="left:543.6px;width:129.65px;top:300.8px;height:16.26px;line-height:17.26px">5</div>
<div class="c" style="left:673.25px;width:111px;top:300.8px;height:16.26px;line-height:17.26px">D-20</div>
<div class="c" style="left:784.25px;width:119.5px;top:300.8px;height:16.26px;line-height:17.26px">14-Apr-25</div>
<div class="c" style="left:903.75px;width:193.75px;top:300.8px;height:16.26px;line-height:17.26px">Shared</div>
<div class="c" style="left:1097.5px;width:76.9px;top:300.8px;height:16.26px;line-height:17.26px">Reserved</div>
<div class="c" style="left:1174.4px;width:90.5px;top:300.8px;height:16.26px;line-height:17.26px">Pending move</div>
<div class="c" style="left:35px;width:35.4px;top:317.06px;height:16.26px;line-height:17.26px">38</div>
<div class="c" style="left:70.4px;width:115.1px;top:317.06px;height:16.26px;line-height:17.26px">EMP-1038</div>
<div class="c" style="left:185.5px;width:77px;top:317.06px;height:16.26px;line-height:17.26px">Employee 38</div>
<div class="c" style="left:262.5px;width:109px;top:317.06px;height:16.26px;line-height:17.26px">HR</div>
<div class="c" style="left:371.5px;width:82.25px;top:317.06px;height:16.26px;line-height:17.26px">Manager</div>
<div class="c" style="left:453.75px;width:89.85px;top:317.06px;height:16.26px;line-height:17.26px">HQ Tower B</div>
<div class="c" style="left:543.6px;width:129.65px;top:317.06px;height:16.26px;line-height:17.26px">6</div>
<div class="c" style="left:673.25px;width:111px;top:317.06px;height:16.26px;line-height:17.26px">D-147</div>
<div class="c" style="left:784.25px;width:119.5px;top:317.06px;height:16.26px;line-height:17.26px">01-Mar-25</div>
<div class="c" style="left:903.75px;width:193.75px;top:317.06px;height:16.26px;line-height:17.26px">Shared</div>
<div class="c" style="left:1097.5px;width:76.9px;top:317.06px;height:16.26px;line-height:17.26px">Vacant</div>
<div class="c" style="left:1174.4px;width:90.5px;top:317.06px;height:16.26px;line-height:17.26px">Pending move</div>
<div class="c" style="left:35px;width:35.4px;top:333.32px;height:16.26px;line-height:17.26px">44</div>
<div class="c" style="left:70.4px;width:115.1px;top:333.32px;height:16.26px;line-height:17.26px">EMP-1044</div>
<div class="c" style="left:185.5px;width:77px;top:333.32px;height:16.26px;line-height:17.26px">Employee 44</div>
<div class="c" style="left:262.5px;width:109px;top:333.32px;height:16.26px;line-height:17.26px">HR</div>
<div class="c" style="left:371.5px;width:82.25px;top:333.32px;height:16.26px;line-height:17.26px">Manager</div>
<div class="c" style="left:453.75px;width:89.85px;top:333.32px;height:16.26px;line-height:17.26px">Regional Office 1</div>
<div class="c" style="left:543.6px;width:129.65px;top:333.32px;height:16.26px;line-height:17.26px">5</div>
<div class="c" style="left:673.25px;width:111px;top:333.32px;height:16.26px;line-height:17.26px">D-108</div>
<div class="c" style="left:784.25px;width:119.5px;top:333.32px;height:16.26px;line-height:17.26px">24-Jun-25</div>
<div class="c" style="left:903.75px;width:193.75px;top:333.32px;height:16.26px;line-height:17.26px">Temporary</div>
<div class="c" style="left:1097.5px;width:76.9px;top:333.32px;height:16.26px;line-height:17.26px">Reserved</div>
<div class="c" style="left:1174.4px;width:90.5px;top:333.32px;height:16.26px;line-height:17.26px">Pending move</div>
<div class="c" style="left:35px;width:35.4px;top:349.58px;height:16.26px;line-height:17.26px">47</div>
<div class="c" style="left:70.4px;width:115.1px;top:349.58px;height:16.26px;line-height:17.26px">EMP-1047</div>
<div class="c" style="left:185.5px;width:77px;top:349.58px;height:16.26px;line-height:17.26px">Employee 47</div>
<div class="c" style="left:262.5px;width:109px;top:349.58px;height:16.26px;line-height:17.26px">HR</div>
<div class="c" style="left:371.5px;width:82.25px;top:349.58px;height:16.26px;line-height:17.26px">Assistant</div>
<div class="c" style="left:453.75px;width:89.85px;top:349.58px;height:16.26px;line-height:17.26px">HQ Tower B</div>
<div class="c" style="left:543.6px;width:129.65px;top:349.58px;height:16.26px;line-height:17.26px">8</div>
<div class="c" style="left:673.25px;width:111px;top:349.58px;height:16.26px;line-height:17.26px">D-140</div>
<div class="c" style="left:784.25px;width:119.5px;top:349.58px;height:16.26px;line-height:17.26px">04-Jul-25</div>
<div class="c" style="left:903.75px;width:193.75px;top:349.58px;height:16.26px;line-height:17.26px">Permanent</div>
<div class="c" style="left:1097.5px;width:76.9px;top:349.58px;height:16.26px;line-height:17.26px">Vacant</div>
<div class="c" style="left:1174.4px;width:90.5px;top:349.58px;height:16.26px;line-height:17.26px">Active</div>
<div class="c" style="left:35px;width:35.4px;top:365.84px;height:16.26px;line-height:17.26px">48</div>
<div class="c" style="left:70.4px;width:115.1px;top:365.84px;height:16.26px;line-height:17.26px">EMP-1048</div>
<div class="c" style="left:185.5px;width:77px;top:365.84px;height:16.26px;line-height:17.26px">Employee 48</div>
<div class="c" style="left:262.5px;width:109px;top:365.84px;height:16.26px;line-height:17.26px">HR</div>
<div class="c" style="left:371.5px;width:82.25px;top:365.84px;height:16.26px;line-height:17.26px">Executive</div>
<div class="c" style="left:453.75px;width:89.85px;top:365.84px;height:16.26px;line-height:17.26px">Regional Office 1</div>
<div class="c" style="left:543.6px;width:129.65px;top:365.84px;height:16.26px;line-height:17.26px">5</div>
<div class="c" style="left:673.25px;width:111px;top:365.84px;height:16.26px;line-height:17.26px">D-115</div>
<div class="c" style="left:784.25px;width:119.5px;top:365.84px;height:16.26px;line-height:17.26px">28-Jan-25</div>
<div class="c" style="left:903.75px;width:193.75px;top:365.84px;height:16.26px;line-height:17.26px">Shared</div>
<div class="c" style="left:1097.5px;width:76.9px;top:365.84px;height:16.26px;line-height:17.26px">Occupied</div>
<div class="c" style="left:1174.4px;width:90.5px;top:365.84px;height:16.26px;line-height:17.26px">Active</div>
<div class="c" style="left:35px;width:35.4px;top:382.1px;height:16.26px;line-height:17.26px">62</div>
<div class="c" style="left:70.4px;width:115.1px;top:382.1px;height:16.26px;line-height:17.26px">EMP-1062</div>
<div class="c" style="left:185.5px;width:77px;top:382.1px;height:16.26px;line-height:17.26px">Employee 62</div>
<div class="c" style="left:262.5px;width:109px;top:382.1px;height:16.26px;line-height:17.26px">HR</div>
<div class="c" style="left:371.5px;width:82.25px;top:382.1px;height:16.26px;line-height:17.26px">Executive</div>
<div class="c" style="left:453.75px;width:89.85px;top:382.1px;height:16.26px;line-height:17.26px">Regional Office 1</div>
<div class="c" style="left:543.6px;width:129.65px;top:382.1px;height:16.26px;line-height:17.26px">10</div>
<div class="c" style="left:673.25px;width:111px;top:382.1px;height:16.26px;line-height:17.26px">D-54</div>
<div class="c" style="left:784.25px;width:119.5px;top:382.1px;height:16.26px;line-height:17.26px">05-May-25</div>
<div class="c" style="left:903.75px;width:193.75px;top:382.1px;height:16.26px;line-height:17.26px">Temporary</div>
<div class="c" style="left:1097.5px;width:76.9px;top:382.1px;height:16.26px;line-height:17.26px">Vacant</div>
<div class="c" style="left:1174.4px;width:90.5px;top:382.1px;height:16.26px;line-height:17.26px">Pending move</div>
<div class="c" style="left:35px;width:35.4px;top:398.36px;height:16.26px;line-height:17.26px">71</div>
<div class="c" style="left:70.4px;width:115.1px;top:398.36px;height:16.26px;line-height:17.26px">EMP-1071</div>
<div class="c" style="left:185.5px;width:77px;top:398.36px;height:16.26px;line-height:17.26px">Employee 71</div>
<div class="c" style="left:262.5px;width:109px;top:398.36px;height:16.26px;line-height:17.26px">HR</div>
<div class="c" style="left:371.5px;width:82.25px;top:398.36px;height:16.26px;line-height:17.26px">Analyst</div>
<div class="c" style="left:453.75px;width:89.85px;top:398.36px;height:16.26px;line-height:17.26px">HQ Tower B</div>
<div class="c" style="left:543.6px;width:129.65px;top:398.36px;height:16.26px;line-height:17.26px">5</div>
<div class="c" style="left:673.25px;width:111px;top:398.36px;height:16.26px;line-height:17.26px">D-115</div>
<div class="c" style="left:784.25px;width:119.5px;top:398.36px;height:16.26px;line-height:17.26px">13-Jul-25</div>
<div class="c" style="left:903.75px;width:193.75px;top:398.36px;height:16.26px;line-height:17.26px">Temporary</div>
<div class="c" style="left:1097.5px;width:76.9px;top:398.36px;height:16.26px;line-height:17.26px">Vacant</div>
<div class="c" style="left:1174.4px;width:90.5px;top:398.36px;height:16.26px;line-height:17.26px">Pending move</div>
<div class="c" style="left:35px;width:35.4px;top:414.62px;height:16.26px;line-height:17.26px">72</div>
<div class="c" style="left:70.4px;width:115.1px;top:414.62px;height:16.26px;line-height:17.26px">EMP-1072</div>
<div class="c" style="left:185.5px;width:77px;top:414.62px;height:16.26px;line-height:17.26px">Employee 72</div>
<div class="c" style="left:262.5px;width:109px;top:414.62px;height:16.26px;line-height:17.26px">HR</div>
<div class="c" style="left:371.5px;width:82.25px;top:414.62px;height:16.26px;line-height:17.26px">Assistant</div>
<div class="c" style="left:453.75px;width:89.85px;top:414.62px;height:16.26px;line-height:17.26px">HQ Tower A</div>
<div class="c" style="left:543.6px;width:129.65px;top:414.62px;height:16.26px;line-height:17.26px">5</div>
<div class="c" style="left:673.25px;width:111px;top:414.62px;height:16.26px;line-height:17.26px">D-118</div>
<div class="c" style="left:784.25px;width:119.5px;top:414.62px;height:16.26px;line-height:17.26px">02-Jul-25</div>
<div class="c" style="left:903.75px;width:193.75px;top:414.62px;height:16.26px;line-height:17.26px">Temporary</div>
<div class="c" style="left:1097.5px;width:76.9px;top:414.62px;height:16.26px;line-height:17.26px">Occupied</div>
<div class="c" style="left:1174.4px;width:90.5px;top:414.62px;height:16.26px;line-height:17.26px">Temporary allocation</div>
<div class="c" style="left:35px;width:35.4px;top:430.88px;height:16.26px;line-height:17.26px">75</div>
<div class="c" style="left:70.4px;width:115.1px;top:430.88px;height:16.26px;line-height:17.26px">EMP-1075</div>
<div class="c" style="left:185.5px;width:77px;top:430.88px;height:16.26px;line-height:17.26px">Employee 75</div>
<div class="c" style="left:262.5px;width:109px;top:430.88px;height:16.26px;line-height:17.26px">HR</div>
<div class="c" style="left:371.5px;width:82.25px;top:430.88px;height:16.26px;line-height:17.26px">Executive</div>
<div class="c" style="left:453.75px;width:89.85px;top:430.88px;height:16.26px;line-height:17.26px">Regional Office 2</div>
<div class="c" style="left:543.6px;width:129.65px;top:430.88px;height:16.26px;line-height:17.26px">8</div>
<div class="c" style="left:673.25px;width:111px;top:430.88px;height:16.26px;line-height:17.26px">D-5</div>
<div class="c" style="left:784.25px;width:119.5px;top:430.88px;height:16.26px;line-height:17.26px">19-Apr-25</div>
<div class="c" style="left:903.75px;width:193.75px;top:430.88px;height:16.26px;line-height:17.26px">Shared</div>
<div class="c" style="left:1097.5px;width:76.9px;top:430.88px;height:16.26px;line-height:17.26px">Vacant</div>
<div class="c" style="left:1174.4px;width:90.5px;top:430.88px;height:16.26px;line-height:17.26px">Active</div>
<div class="c" style="left:35px;width:35.4px;top:447.14px;height:16.26px;line-height:17.26px">82</div>
<div class="c" style="left:70.4px;width:115.1px;top:447.14px;height:16.26px;line-height:17.26px">EMP-1082</div>
<div class="c" style="left:185.5px;width:77px;top:447.14px;height:16.26px;line-height:17.26px">Employee 82</div>
<div class="c" style="left:262.5px;width:109px;top:447.14px;height:16.26px;line-height:17.26px">HR</div>
<div class="c" style="left:371.5px;width:82.25px;top:447.14px;height:16.26px;line-height:17.26px">Manager</div>
<div class="c" style="left:453.75px;width:89.85px;top:447.14px;height:16.26px;line-height:17.26px">HQ Tower B</div>
<div class="c" style="left:543.6px;width:129.65px;top:447.14px;height:16.26px;line-height:17.26px">2</div>
<div class="c" style="left:673.25px;width:111px;top:447.14px;height:16.26px;line-height:17.26px">D-67</div>
<div class="c" style="left:784.25px;width:119.5px;top:447.14px;height:16.26px;line-height:17.26px">08-Jan-25</div>
<div class="c" style="left:903.75px;width:193.75px;top:447.14px;height:16.26px;line-height:17.26px">Permanent</div>
<div class="c" style="left:1097.5px;width:76.9px;top:447.14px;height:16.26px;line-height:17.26px">Reserved</div>
<div class="c" style="left:1174.4px;width:90.5px;top:447.14px;height:16.26px;line-height:17.26px">Reassigned</div>
<div class="c" style="left:35px;width:35.4px;top:463.4px;height:16.26px;line-height:17.26px">85</div>
<div class="c" style="left:70.4px;width:115.1px;top:463.4px;height:16.26px;line-height:17.26px">EMP-1085</div>
<div class="c" style="left:185.5px;width:77px;top:463.4px;height:16.26px;line-height:17.26px">Employee 85</div>
<div class="c" style="left:262.5px;width:109px;top:463.4px;height:16.26px;line-height:17.26px">HR</div>
<div class="c" style="left:371.5px;width:82.25px;top:463.4px;height:16.26px;line-height:17.26px">Coordinator</div>
<div class="c" style="left:453.75px;width:89.85px;top:463.4px;height:16.26px;line-height:17.26px">Regional Office 2</div>
<div class="c" style="left:543.6px;width:129.65px;top:463.4px;height:16.26px;line-height:17.26px">7</div>
<div class="c" style="left:673.25px;width:111px;top:463.4px;height:16.26px;line-height:17.26px">D-50</div>
<div class="c" style="left:784.25px;width:119.5px;top:463.4px;height:16.26px;line-height:17.26px">25-Apr-25</div>
<div class="c" style="left:903.75px;width:193.75px;top:463.4px;height:16.26px;line-height:17.26px">Temporary</div>
<div class="c" style="left:1097.5px;width:76.9px;top:463.4px;height:16.26px;line-height:17.26px">Vacant</div>
<div class="c" style="left:1174.4px;width:90.5px;top:463.4px;height:16.26px;line-height:17.26px">Reassigned</div>
<div class="c" style="left:35px;width:35.4px;top:479.66px;height:16.26px;line-height:17.26px">86</div>
<div class="c" style="left:70.4px;width:115.1px;top:479.66px;height:16.26px;line-height:17.26px">EMP-1086</div>
<div class="c" style="left:185.5px;width:77px;top:479.66px;height:16.26px;line-height:17.26px">Employee 86</div>
<div class="c" style="left:262.5px;width:109px;top:479.66px;height:16.26px;line-height:17.26px">HR</div>
<div class="c" style="left:371.5px;width:82.25px;top:479.66px;height:16.26px;line-height:17.26px">Analyst</div>
<div class="c" style="left:453.75px;width:89.85px;top:479.66px;height:16.26px;line-height:17.26px">Regional Office 2</div>
<div class="c" style="left:543.6px;width:129.65px;top:479.66px;height:16.26px;line-height:17.26px">10</div>
<div class="c" style="left:673.25px;width:111px;top:479.66px;height:16.26px;line-height:17.26px">D-123</div>
<div class="c" style="left:784.25px;width:119.5px;top:479.66px;height:16.26px;line-height:17.26px">12-May-25</div>
<div class="c" style="left:903.75px;width:193.75px;top:479.66px;height:16.26px;line-height:17.26px">Permanent</div>
<div class="c" style="left:1097.5px;width:76.9px;top:479.66px;height:16.26px;line-height:17.26px">Reserved</div>
<div class="c" style="left:1174.4px;width:90.5px;top:479.66px;height:16.26px;line-height:17.26px">Reassigned</div>
<div class="c" style="left:35px;width:35.4px;top:495.92px;height:16.26px;line-height:17.26px">88</div>
<div class="c" style="left:70.4px;width:115.1px;top:495.92px;height:16.26px;line-height:17.26px">EMP-1088</div>
<div class="c" style="left:185.5px;width:77px;top:495.92px;height:16.26px;line-height:17.26px">Employee 88</div>
<div class="c" style="left:262.5px;width:109px;top:495.92px;height:16.26px;line-height:17.26px">HR</div>
<div class="c" style="left:371.5px;width:82.25px;top:495.92px;height:16.26px;line-height:17.26px">Analyst</div>
<div class="c" style="left:453.75px;width:89.85px;top:495.92px;height:16.26px;line-height:17.26px">Regional Office 1</div>
<div class="c" style="left:543.6px;width:129.65px;top:495.92px;height:16.26px;line-height:17.26px">8</div>
<div class="c" style="left:673.25px;width:111px;top:495.92px;height:16.26px;line-height:17.26px">D-68</div>
<div class="c" style="left:784.25px;width:119.5px;top:495.92px;height:16.26px;line-height:17.26px">30-Apr-25</div>
<div class="c" style="left:903.75px;width:193.75px;top:495.92px;height:16.26px;line-height:17.26px">Temporary</div>
<div class="c" style="left:1097.5px;width:76.9px;top:495.92px;height:16.26px;line-height:17.26px">Reserved</div>
<div class="c" style="left:1174.4px;width:90.5px;top:495.92px;height:16.26px;line-height:17.26px">Reassigned</div>
<div class="c" style="left:35px;width:35.4px;top:512.18px;height:16.26px;line-height:17.26px">91</div>
<div class="c" style="left:70.4px;width:115.1px;top:512.18px;height:16.26px;line-height:17.26px">EMP-1091</div>
<div class="c" style="left:185.5px;width:77px;top:512.18px;height:16.26px;line-height:17.26px">Employee 91</div>
<div class="c" style="left:262.5px;width:109px;top:512.18px;height:16.26px;line-height:17.26px">HR</div>
<div class="c" style="left:371.5px;width:82.25px;top:512.18px;height:16.26px;line-height:17.26px">Coordinator</div>
<div class="c" style="left:453.75px;width:89.85px;top:512.18px;height:16.26px;line-height:17.26px">HQ Tower B</div>
<div class="c" style="left:543.6px;width:129.65px;top:512.18px;height:16.26px;line-height:17.26px">8</div>
<div class="c" style="left:673.25px;width:111px;top:512.18px;height:16.26px;line-height:17.26px">D-31</div>
<div class="c" style="left:784.25px;width:119.5px;top:512.18px;height:16.26px;line-height:17.26px">26-Apr-25</div>
<div class="c" style="left:903.75px;width:193.75px;top:512.18px;height:16.26px;line-height:17.26px">Shared</div>
<div class="c" style="left:1097.5px;width:76.9px;top:512.18px;height:16.26px;line-height:17.26px">Occupied</div>
<div class="c" style="left:1174.4px;width:90.5px;top:512.18px;height:16.26px;line-height:17.26px">Pending move</div>
<div class="c" style="left:35px;width:35.4px;top:528.44px;height:16.26px;line-height:17.26px">94</div>
<div class="c" style="left:70.4px;width:115.1px;top:528.44px;height:16.26px;line-height:17.26px">EMP-1094</div>
<div class="c" style="left:185.5px;width:77px;top:528.44px;height:16.26px;line-height:17.26px">Employee 94</div>
<div class="c" style="left:262.5px;width:109px;top:528.44px;height:16.26px;line-height:17.26px">HR</div>
<div class="c" style="left:371.5px;width:82.25px;top:528.44px;height:16.26px;line-height:17.26px">Executive</div>
<div class="c" style="left:453.75px;width:89.85px;top:528.44px;height:16.26px;line-height:17.26px">Regional Office 1</div>
<div class="c" style="left:543.6px;width:129.65px;top:528.44px;height:16.26px;line-height:17.26px">1</div>
<div class="c" style="left:673.25px;width:111px;top:528.44px;height:16.26px;line-height:17.26px">D-126</div>
<div class="c" style="left:784.25px;width:119.5px;top:528.44px;height:16.26px;line-height:17.26px">14-Jan-25</div>
<div class="c" style="left:903.75px;width:193.75px;top:528.44px;height:16.26px;line-height:17.26px">Shared</div>
<div class="c" style="left:1097.5px;width:76.9px;top:528.44px;height:16.26px;line-height:17.26px">Occupied</div>
<div class="c" style="left:1174.4px;width:90.5px;top:528.44px;height:16.26px;line-height:17.26px">Active</div>
</div>
</div>
</body></html>
